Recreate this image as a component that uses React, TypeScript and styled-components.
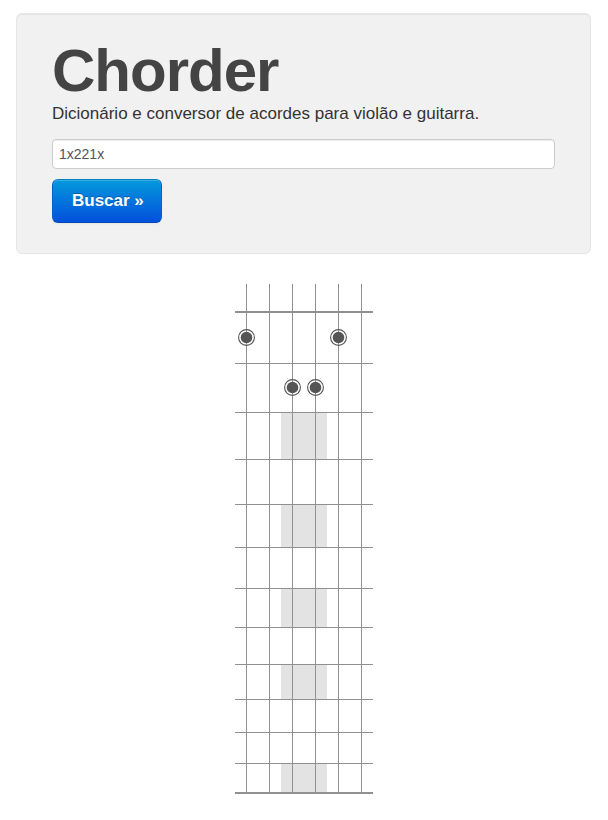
import React, { useId, useState } from "react";
import styled, { createGlobalStyle } from "styled-components";

const GlobalStyle = createGlobalStyle`
  *, *::before, *::after { box-sizing: border-box; }
  body {
    margin: 0;
    background: #fff;
    color: #333;
    font-family: "Liberation Sans", Arial, sans-serif;
  }
`;

const Page = styled.main`
  display: flex;
  flex-direction: column;
  gap: 30px;
  padding: 13px 0 24px;
`;

const Hero = styled.header`
  margin: 0 17px 0 16px;
  padding: 27px 35px 30px;
  background: #f1f1f1;
  border: 1px solid #e5e5e5;
  border-radius: 6px;
  box-shadow: inset 0 1px 1px rgba(0, 0, 0, 0.05);
`;

const Title = styled.h1`
  margin: 0;
  color: #444;
  font-size: 60px;
  line-height: 60px;
  letter-spacing: -1px;
`;

const Tagline = styled.label`
  display: block;
  margin-bottom: 12px;
  font-size: 17px;
  line-height: 26px;
`;

const SearchForm = styled.form`
  display: flex;
  flex-direction: column;
  align-items: flex-start;
`;

const ChordInput = styled.input`
  width: 100%;
  height: 30px;
  margin-bottom: 10px;
  padding: 4px 6px;
  border: 1px solid #ccc;
  border-radius: 4px;
  background: #fff;
  box-shadow: inset 0 1px 1px rgba(0, 0, 0, 0.075);
  color: #555;
  font-family: inherit;
  font-size: 14px;
  line-height: 20px;
`;

const SearchButton = styled.button`
  height: 44px;
  padding: 0 17px 0 19px;
  border: 1px solid;
  border-color: #0580c0 #0560c8 #0448b8;
  border-radius: 6px;
  background: linear-gradient(to bottom, #0499dc, #0350dc);
  box-shadow: inset 0 1px 0 rgba(255, 255, 255, 0.2),
    0 1px 2px rgba(0, 0, 0, 0.05);
  color: #fff;
  font-family: inherit;
  font-size: 17px;
  font-weight: 700;
  line-height: 24px;
  text-shadow: 0 -1px 0 rgba(0, 0, 0, 0.25);
  cursor: pointer;
`;

const Fretboard = styled.section`
  align-self: center;
`;

const Fret = styled.div<{ $thick: boolean }>`
  display: grid;
  grid-template-columns: repeat(6, 23px);
  border-bottom: ${(p) => (p.$thick ? 2 : 1)}px solid #919191;
`;

const StringCell = styled.div<{ $height: number; $inlay: boolean }>`
  display: flex;
  align-items: center;
  justify-content: center;
  height: ${(p) => p.$height}px;
  padding-bottom: 2px;
  background: linear-gradient(#919191, #919191) 11px 0 / 1px 100% no-repeat
    ${(p) => (p.$inlay ? "#e3e3e3" : "transparent")};
`;

const Finger = styled.svg`
  display: block;
  width: 17px;
  height: 17px;
`;

const FRET_HEIGHTS = [27, 50, 48, 46, 44, 42, 40, 38, 36, 34, 32, 30, 28];
const INLAY_FRETS = [3, 5, 7, 9, 12];
const STRINGS = [0, 1, 2, 3, 4, 5];

function FingerMark() {
  return (
    <Finger viewBox="0 0 17 17" aria-hidden="true">
      <circle cx="8.5" cy="8.5" r="7.9" fill="#fff" stroke="#555" strokeWidth="1.1" />
      <path d="M8.5 1v15" stroke="#919191" />
      <circle cx="8.5" cy="8.5" r="5.8" fill="#555" />
    </Finger>
  );
}

export default function App() {
  const inputId = useId();
  const [query, setQuery] = useState("1x221x");
  const [chord, setChord] = useState("1x221x");

  return (
    <>
      <GlobalStyle />
      <Page>
        <Hero>
          <Title>Chorder</Title>
          <Tagline htmlFor={inputId}>
            Dicionário e conversor de acordes para violão e guitarra.
          </Tagline>
          <SearchForm
            onSubmit={(event) => {
              event.preventDefault();
              setChord(query);
            }}
          >
            <ChordInput
              id={inputId}
              type="text"
              value={query}
              onChange={(event) => setQuery(event.target.value)}
            />
            <SearchButton type="submit">Buscar »</SearchButton>
          </SearchForm>
        </Hero>
        <Fretboard>
          {FRET_HEIGHTS.map((height, fret) => (
            <Fret
              key={fret}
              $thick={fret === 0 || fret === FRET_HEIGHTS.length - 1}
            >
              {STRINGS.map((string) => (
                <StringCell
                  key={string}
                  $height={height}
                  $inlay={
                    INLAY_FRETS.includes(fret) && (string === 2 || string === 3)
                  }
                >
                  {fret > 0 && chord[string] === String(fret) && <FingerMark />}
                </StringCell>
              ))}
            </Fret>
          ))}
        </Fretboard>
      </Page>
    </>
  );
}
